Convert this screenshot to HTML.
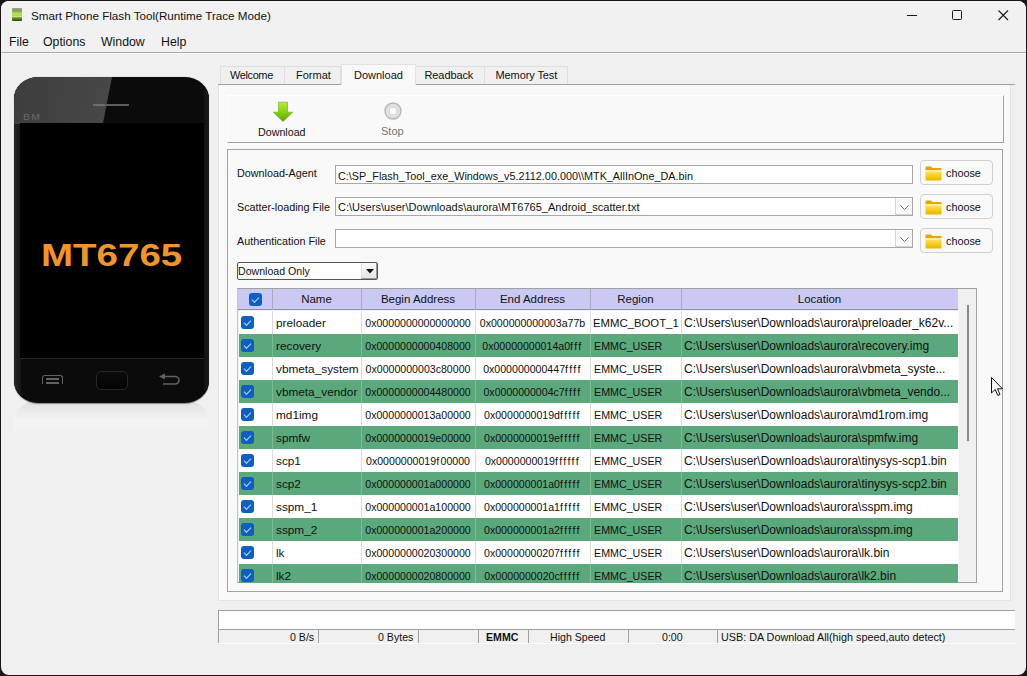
<!DOCTYPE html>
<html><head><meta charset="utf-8">
<style>
*{margin:0;padding:0;box-sizing:border-box}
html,body{width:1027px;height:676px;overflow:hidden;background:#1c1518;font-family:"Liberation Sans",sans-serif;color:#000}
.a{position:absolute}
#win{position:absolute;left:1px;top:1px;width:1025px;height:674px;background:#f0f0f0;border-radius:8px;overflow:hidden}
.t{position:absolute;white-space:nowrap;font-size:11px;line-height:13px;color:#111}
.menu{font-size:12.3px;line-height:14px;margin-top:-1px}
.tab{position:absolute;top:66px;height:18px;background:#f0f0f0;border:1px solid #dedede;border-bottom:none}
.tabt{position:absolute;top:69px;font-size:11px;line-height:13px;white-space:nowrap;color:#111}
.lbl{font-size:10.8px}
.fld{position:absolute;left:335px;width:578px;height:19px;background:#fff;border:1px solid #a8a8a8}
.drop{position:absolute;right:0;top:0;width:17px;height:17px;border:1px solid #d4d4d4;border-right:none;border-top:none;background:#f9f9f9}
.btn{position:absolute;left:920px;width:73px;height:25px;background:#f9f9f9;border:1px solid #d0d0d0;border-radius:4px}
.folder{position:absolute;left:4px;top:5px}
.btnt{position:absolute;left:25px;top:6px;font-size:10.8px;line-height:13px;color:#111}
.cb{position:absolute;width:13px;height:13px;background:#0f5fc2;border-radius:3px}
.cb::after{content:"";position:absolute;left:3px;top:3.5px;width:6px;height:3px;border-left:1.6px solid #b4d8ff;border-bottom:1.6px solid #b4d8ff;transform:rotate(-45deg)}
.hd{font-size:11.5px;color:#111}
.tn{font-size:11.8px}
.f{letter-spacing:1.4px}
.trg{font-size:11.35px}
.tl{font-size:12px}
.td{font-size:10.6px;color:#111}

.st{position:absolute;top:629px;height:14px;border-left:1px solid #a0a0a0;border-top:1px solid #a0a0a0;background:#f0f0f0}
.stt{position:absolute;top:631px;font-size:10.6px;line-height:12px;white-space:nowrap;color:#111}
</style></head><body>
<div id="win"></div>
<!-- title bar -->
<div class="a" style="left:1px;top:1px;width:1025px;height:51px;background:#f1f1f1;border-radius:8px 8px 0 0"></div>
<div class="a" style="left:1px;top:52px;width:1025px;height:1px;background:#a9a9a9"></div>
<div class="a" style="left:1px;top:53px;width:1025px;height:1px;background:#f8f8f8"></div>
<div class="a" style="left:12px;top:8px;width:10px;height:13px;border-radius:1px;background:linear-gradient(#9a9a9a 0,#9a9a9a 10%,#6fa82a 16%,#a5d648 40%,#d9efa8 45%,#9ad048 52%,#c5e68a 66%,#6aa020 75%,#3a6a0a 92%,#203a05 100%)"></div>
<div class="t" style="left:31px;top:9px;font-size:11.65px;line-height:13px">Smart Phone Flash Tool(Runtime Trace Mode)</div>
<!-- window controls -->
<div class="a" style="left:907px;top:15px;width:10px;height:1px;background:#1a1a1a"></div>
<div class="a" style="left:952px;top:10px;width:10px;height:10px;border:1px solid #1a1a1a;border-radius:1.5px"></div>
<svg class="a" style="left:998px;top:10px" width="11" height="11"><path d="M0.5 0.5L10 10M10 0.5L0.5 10" stroke="#1a1a1a" stroke-width="1.1" fill="none"/></svg>
<!-- menu -->
<div class="t menu" style="left:9px;top:36px">File</div>
<div class="t menu" style="left:43px;top:36px">Options</div>
<div class="t menu" style="left:101px;top:36px">Window</div>
<div class="t menu" style="left:161px;top:36px">Help</div>

<!-- phone -->
<div class="a" style="left:14px;top:401px;width:195px;height:36px;background:linear-gradient(rgba(0,0,0,0.07),rgba(0,0,0,0.02) 30%,rgba(255,255,255,0.25) 55%,rgba(255,255,255,0));border-radius:22px 22px 0 0"></div>
<div class="a" style="left:14px;top:77px;width:195px;height:326px;border-radius:24px/22px;background:#0b0b0b;overflow:hidden;box-shadow:0 0.5px 1px rgba(0,0,0,.4)">
  <div class="a" style="left:0;top:0;width:7px;height:326px;background:linear-gradient(90deg,#262626,#161616)"></div>
  <div class="a" style="right:0;top:0;width:5px;height:326px;background:linear-gradient(90deg,#111,#1a1a1a)"></div>
  <div class="a" style="left:-30px;top:0;width:127.5px;height:47px;background:linear-gradient(90deg,#3a3a3a,#474747);transform:skewX(-11deg);transform-origin:0 0"></div>
  <div class="a" style="left:79px;top:27px;width:36px;height:2px;background:#5c5c5c"></div>
  <div class="a" style="left:79px;top:27px;width:12px;height:2px;background:#6e6e6e"></div>
  <div class="a" style="left:8.5px;top:35px;font-size:9.5px;line-height:9px;color:#6a6a6a;letter-spacing:1.2px;transform:scaleX(1.1);transform-origin:0 0">BM</div>
  <div class="a" style="left:6px;top:46px;width:184px;height:236px;background:#000"></div>
  <div class="a" style="left:6px;top:281px;width:184px;height:1px;background:#262626"></div>
</div>
<div class="a" style="left:41px;top:244px;width:112px;font-size:30.8px;line-height:23px;height:23px;font-weight:bold;color:#f0952a;transform:scaleX(1.25);transform-origin:0 0;white-space:nowrap">MT6765</div>
<!-- phone buttons -->
<div class="a" style="left:42px;top:375px;width:21px;height:9px;border:1.5px solid #626262;border-radius:3px 3px 0 0;border-bottom:none"></div>
<div class="a" style="left:46px;top:378px;width:13px;height:1.5px;background:#626262"></div>
<div class="a" style="left:46px;top:382px;width:13px;height:1.5px;background:#626262"></div>
<div class="a" style="left:96px;top:371px;width:32px;height:19px;border:1px solid #262626;border-radius:5px;background:linear-gradient(#0d0d0d,#020202)"></div>
<svg class="a" style="left:158px;top:372px" width="24" height="14"><path d="M5 4.5H17a4 3.75 0 0 1 0 7.5H5" stroke="#626262" stroke-width="1.6" fill="none"/><path d="M1 4.5L7 1.5V7.5Z" fill="#626262"/></svg>

<!-- tab widget -->
<div class="a" style="left:218px;top:84px;width:793px;height:517px;background:#f9f9f9;border:1px solid #e4e4e4;border-top:none"></div>
<div class="a" style="left:218px;top:84px;width:797px;height:1px;background:#a0a0a0"></div>
<div class="tab" style="left:220px;width:65px"></div>
<div class="tab" style="left:284px;width:57px"></div>
<div class="tab" style="left:415px;width:70px"></div>
<div class="tab" style="left:484px;width:84px"></div>
<div class="a" style="left:341px;top:64px;width:75px;height:21px;background:#f9f9f9;border:1px solid #e2e2e2;border-bottom:none"></div>
<div class="tabt" style="left:230px;letter-spacing:-0.4px">Welcome</div>
<div class="tabt" style="left:296px">Format</div>
<div class="tabt" style="left:354px;top:69px">Download</div>
<div class="tabt" style="left:424.5px;letter-spacing:-0.1px">Readback</div>
<div class="tabt" style="left:495.5px;letter-spacing:-0.1px">Memory Test</div>

<!-- toolbar -->
<div class="a" style="left:227px;top:95px;width:777px;height:48px;background:#f9f9f9;border-right:1px solid #a0a0a0;border-bottom:1px solid #a0a0a0;border-top:1px solid #fff;border-left:1px solid #fff"></div>
<svg class="a" style="left:273px;top:101px" width="20" height="21"><defs><linearGradient id="ga" x1="0" y1="0" x2="0" y2="1"><stop offset="0" stop-color="#b2ee3a"/><stop offset="0.45" stop-color="#8ed616"/><stop offset="1" stop-color="#5aa400"/></linearGradient></defs><path d="M5.5 1.2H14.5V11.2H19.7L10 20.6L0.3 11.2H5.5Z" fill="url(#ga)" stroke="#6aa80a" stroke-width="0.6" stroke-linejoin="round"/></svg>
<div class="t" style="left:258px;top:126px;font-size:10.7px">Download</div>
<svg class="a" style="left:383px;top:101px" width="20" height="20"><circle cx="10" cy="10" r="8" fill="#e4e4e4" stroke="#b8b8b8" stroke-width="1.4"/><circle cx="10" cy="10" r="6" fill="none" stroke="#d0d0d0" stroke-width="0.6"/><rect x="6.7" y="6.7" width="6.6" height="6.6" rx="1" fill="#fff" stroke="#c4c4c4" stroke-width="0.6"/></svg>
<div class="t" style="left:381px;top:125px;font-size:11px;color:#747474">Stop</div>

<!-- group box -->
<div class="a" style="left:227px;top:149px;width:776px;height:443px;border:1px solid #a0a0a0;border-right-color:#a0a0a0;background:#f9f9f9"></div>

<div class="t lbl" style="left:237px;top:167px">Download-Agent</div>
<div class="t lbl" style="left:237px;top:201px">Scatter-loading File</div>
<div class="t lbl" style="left:237px;top:235px">Authentication File</div>

<div class="fld" style="top:165px"><div class="t" style="left:2px;top:4px;font-size:10.83px">C:\SP_Flash_Tool_exe_Windows_v5.2112.00.000\\MTK_AllInOne_DA.bin</div></div>
<div class="fld" style="top:197px"><div class="t" style="left:2px;top:3px;font-size:11.05px">C:\Users\user\Downloads\aurora\MT6765_Android_scatter.txt</div><div class="drop"><svg class="a" style="left:3.5px;top:6.5px" width="9" height="5"><path d="M0.5 0.5L4.5 4.5L8.5 0.5" stroke="#707070" fill="none"/></svg></div></div>
<div class="fld" style="top:229px"><div class="drop"><svg class="a" style="left:3.5px;top:6.5px" width="9" height="5"><path d="M0.5 0.5L4.5 4.5L8.5 0.5" stroke="#707070" fill="none"/></svg></div></div>

<div class="btn" style="top:160px"><svg class="folder" width="17" height="15" viewBox="0 0 17 15"><defs><linearGradient id="fg" x1="0" y1="0" x2="0" y2="1"><stop offset="0" stop-color="#ffe88a"/><stop offset="0.5" stop-color="#f9d020"/><stop offset="1" stop-color="#e8b400"/></linearGradient></defs><path d="M0.5 1.5Q0.5 0.5 1.5 0.5H6L7.5 2H15.5Q16.5 2 16.5 3V4H0.5Z" fill="#e0a800"/><path d="M0.5 4H16.5V13.5Q16.5 14.5 15.5 14.5H1.5Q0.5 14.5 0.5 13.5Z" fill="url(#fg)"/><rect x="1" y="4.5" width="15" height="1.2" fill="#fff6c8" opacity="0.8"/></svg><div class="btnt">choose</div></div>
<div class="btn" style="top:194px"><svg class="folder" width="17" height="15" viewBox="0 0 17 15"><defs><linearGradient id="fg" x1="0" y1="0" x2="0" y2="1"><stop offset="0" stop-color="#ffe88a"/><stop offset="0.5" stop-color="#f9d020"/><stop offset="1" stop-color="#e8b400"/></linearGradient></defs><path d="M0.5 1.5Q0.5 0.5 1.5 0.5H6L7.5 2H15.5Q16.5 2 16.5 3V4H0.5Z" fill="#e0a800"/><path d="M0.5 4H16.5V13.5Q16.5 14.5 15.5 14.5H1.5Q0.5 14.5 0.5 13.5Z" fill="url(#fg)"/><rect x="1" y="4.5" width="15" height="1.2" fill="#fff6c8" opacity="0.8"/></svg><div class="btnt">choose</div></div>
<div class="btn" style="top:228px"><svg class="folder" width="17" height="15" viewBox="0 0 17 15"><defs><linearGradient id="fg" x1="0" y1="0" x2="0" y2="1"><stop offset="0" stop-color="#ffe88a"/><stop offset="0.5" stop-color="#f9d020"/><stop offset="1" stop-color="#e8b400"/></linearGradient></defs><path d="M0.5 1.5Q0.5 0.5 1.5 0.5H6L7.5 2H15.5Q16.5 2 16.5 3V4H0.5Z" fill="#e0a800"/><path d="M0.5 4H16.5V13.5Q16.5 14.5 15.5 14.5H1.5Q0.5 14.5 0.5 13.5Z" fill="url(#fg)"/><rect x="1" y="4.5" width="15" height="1.2" fill="#fff6c8" opacity="0.8"/></svg><div class="btnt">choose</div></div>

<!-- combo -->
<div class="a" style="left:237px;top:262px;width:141px;height:18px;background:#fff;border:1px solid #555;border-radius:2px">
  <div class="t" style="left:0px;top:2px;font-size:10.6px">Download Only</div>
  <div class="a" style="right:0;top:0;width:16px;height:16px;background:linear-gradient(#fafafa,#e4e4e4);border-left:1px solid #e0e0e0;border-right:1px solid #999;border-bottom:1px solid #999"><svg class="a" style="left:3.5px;top:6px" width="8" height="5"><path d="M0 0H8L4 4.5Z" fill="#111"/></svg></div>
</div>

<!--TABLE-->
<div class="a" style="left:237px;top:288px;width:740px;height:295px;border:1px solid #a0a0a0;border-left-color:#c4c4c4;background:#f0f0f0;overflow:hidden"></div>
<div class="a" style="left:238px;top:289px;width:720px;height:21px;background:#c9c9f4;border-bottom:1px solid #8f8fa6"></div>
<div class="a" style="left:272px;top:289px;width:1px;height:21px;background:#a8a8c8"></div>
<div class="a" style="left:361px;top:289px;width:1px;height:21px;background:#a8a8c8"></div>
<div class="a" style="left:475px;top:289px;width:1px;height:21px;background:#a8a8c8"></div>
<div class="a" style="left:590px;top:289px;width:1px;height:21px;background:#a8a8c8"></div>
<div class="a" style="left:681px;top:289px;width:1px;height:21px;background:#a8a8c8"></div>
<div class="t hd" style="left:272px;width:89px;top:293px;text-align:center">Name</div>
<div class="t hd" style="left:361px;width:114px;top:293px;text-align:center">Begin Address</div>
<div class="t hd" style="left:475px;width:115px;top:293px;text-align:center">End Address</div>
<div class="t hd" style="left:590px;width:91px;top:293px;text-align:center">Region</div>
<div class="t hd" style="left:681px;width:277px;top:293px;text-align:center">Location</div>
<div class="cb" style="left:249px;top:293px"></div>
<div class="a" style="left:239px;top:311px;width:719px;height:23px;background:#fff"></div>
<div class="a" style="left:272px;top:311px;width:1px;height:23px;background:#dcdcdc"></div>
<div class="a" style="left:361px;top:311px;width:1px;height:23px;background:#dcdcdc"></div>
<div class="a" style="left:475px;top:311px;width:1px;height:23px;background:#dcdcdc"></div>
<div class="a" style="left:590px;top:311px;width:1px;height:23px;background:#dcdcdc"></div>
<div class="a" style="left:681px;top:311px;width:1px;height:23px;background:#dcdcdc"></div>
<div class="cb" style="left:241px;top:316px"></div>
<div class="t tn" style="left:276px;top:317px">preloader</div>
<div class="t td" style="left:361px;width:114px;top:317px;text-align:center">0x0000000000000000</div>
<div class="t td" style="left:475px;width:115px;top:317px;text-align:center">0x000000000003a77b</div>
<div class="t trg" style="left:593px;top:317px;font-size:11.35px">EMMC_BOOT_1</div>
<div class="t tl" style="left:684px;top:317px">C:\Users\user\Downloads\aurora\preloader_k62v...</div>
<div class="a" style="left:239px;top:334px;width:719px;height:23px;background:#5aa87c"></div>
<div class="a" style="left:272px;top:334px;width:1px;height:23px;background:#7cbb96"></div>
<div class="a" style="left:361px;top:334px;width:1px;height:23px;background:#7cbb96"></div>
<div class="a" style="left:475px;top:334px;width:1px;height:23px;background:#7cbb96"></div>
<div class="a" style="left:590px;top:334px;width:1px;height:23px;background:#7cbb96"></div>
<div class="a" style="left:681px;top:334px;width:1px;height:23px;background:#7cbb96"></div>
<div class="cb" style="left:241px;top:339px"></div>
<div class="t tn" style="left:276px;top:340px">recovery</div>
<div class="t td" style="left:361px;width:114px;top:340px;text-align:center">0x0000000000408000</div>
<div class="t td" style="left:475px;width:115px;top:340px;text-align:center">0x00000000014a0<span class="f">fff</span></div>
<div class="t trg" style="left:594px;top:340px;font-size:10.7px">EMMC_USER</div>
<div class="t tl" style="left:684px;top:340px">C:\Users\user\Downloads\aurora\recovery.img</div>
<div class="a" style="left:239px;top:357px;width:719px;height:23px;background:#fff"></div>
<div class="a" style="left:272px;top:357px;width:1px;height:23px;background:#dcdcdc"></div>
<div class="a" style="left:361px;top:357px;width:1px;height:23px;background:#dcdcdc"></div>
<div class="a" style="left:475px;top:357px;width:1px;height:23px;background:#dcdcdc"></div>
<div class="a" style="left:590px;top:357px;width:1px;height:23px;background:#dcdcdc"></div>
<div class="a" style="left:681px;top:357px;width:1px;height:23px;background:#dcdcdc"></div>
<div class="cb" style="left:241px;top:362px"></div>
<div class="t tn" style="left:276px;top:363px">vbmeta_system</div>
<div class="t td" style="left:361px;width:114px;top:363px;text-align:center">0x0000000003c80000</div>
<div class="t td" style="left:475px;width:115px;top:363px;text-align:center">0x000000000447<span class="f">ffff</span></div>
<div class="t trg" style="left:594px;top:363px;font-size:10.7px">EMMC_USER</div>
<div class="t tl" style="left:684px;top:363px">C:\Users\user\Downloads\aurora\vbmeta_syste...</div>
<div class="a" style="left:239px;top:380px;width:719px;height:23px;background:#5aa87c"></div>
<div class="a" style="left:272px;top:380px;width:1px;height:23px;background:#7cbb96"></div>
<div class="a" style="left:361px;top:380px;width:1px;height:23px;background:#7cbb96"></div>
<div class="a" style="left:475px;top:380px;width:1px;height:23px;background:#7cbb96"></div>
<div class="a" style="left:590px;top:380px;width:1px;height:23px;background:#7cbb96"></div>
<div class="a" style="left:681px;top:380px;width:1px;height:23px;background:#7cbb96"></div>
<div class="cb" style="left:241px;top:385px"></div>
<div class="t tn" style="left:276px;top:386px">vbmeta_vendor</div>
<div class="t td" style="left:361px;width:114px;top:386px;text-align:center">0x0000000004480000</div>
<div class="t td" style="left:475px;width:115px;top:386px;text-align:center">0x0000000004c7<span class="f">ffff</span></div>
<div class="t trg" style="left:594px;top:386px;font-size:10.7px">EMMC_USER</div>
<div class="t tl" style="left:684px;top:386px">C:\Users\user\Downloads\aurora\vbmeta_vendo...</div>
<div class="a" style="left:239px;top:403px;width:719px;height:23px;background:#fff"></div>
<div class="a" style="left:272px;top:403px;width:1px;height:23px;background:#dcdcdc"></div>
<div class="a" style="left:361px;top:403px;width:1px;height:23px;background:#dcdcdc"></div>
<div class="a" style="left:475px;top:403px;width:1px;height:23px;background:#dcdcdc"></div>
<div class="a" style="left:590px;top:403px;width:1px;height:23px;background:#dcdcdc"></div>
<div class="a" style="left:681px;top:403px;width:1px;height:23px;background:#dcdcdc"></div>
<div class="cb" style="left:241px;top:408px"></div>
<div class="t tn" style="left:276px;top:409px">md1img</div>
<div class="t td" style="left:361px;width:114px;top:409px;text-align:center">0x0000000013a00000</div>
<div class="t td" style="left:475px;width:115px;top:409px;text-align:center">0x0000000019d<span class="f">fffff</span></div>
<div class="t trg" style="left:594px;top:409px;font-size:10.7px">EMMC_USER</div>
<div class="t tl" style="left:684px;top:409px">C:\Users\user\Downloads\aurora\md1rom.img</div>
<div class="a" style="left:239px;top:426px;width:719px;height:23px;background:#5aa87c"></div>
<div class="a" style="left:272px;top:426px;width:1px;height:23px;background:#7cbb96"></div>
<div class="a" style="left:361px;top:426px;width:1px;height:23px;background:#7cbb96"></div>
<div class="a" style="left:475px;top:426px;width:1px;height:23px;background:#7cbb96"></div>
<div class="a" style="left:590px;top:426px;width:1px;height:23px;background:#7cbb96"></div>
<div class="a" style="left:681px;top:426px;width:1px;height:23px;background:#7cbb96"></div>
<div class="cb" style="left:241px;top:431px"></div>
<div class="t tn" style="left:276px;top:432px">spmfw</div>
<div class="t td" style="left:361px;width:114px;top:432px;text-align:center">0x0000000019e00000</div>
<div class="t td" style="left:475px;width:115px;top:432px;text-align:center">0x0000000019e<span class="f">fffff</span></div>
<div class="t trg" style="left:594px;top:432px;font-size:10.7px">EMMC_USER</div>
<div class="t tl" style="left:684px;top:432px">C:\Users\user\Downloads\aurora\spmfw.img</div>
<div class="a" style="left:239px;top:449px;width:719px;height:23px;background:#fff"></div>
<div class="a" style="left:272px;top:449px;width:1px;height:23px;background:#dcdcdc"></div>
<div class="a" style="left:361px;top:449px;width:1px;height:23px;background:#dcdcdc"></div>
<div class="a" style="left:475px;top:449px;width:1px;height:23px;background:#dcdcdc"></div>
<div class="a" style="left:590px;top:449px;width:1px;height:23px;background:#dcdcdc"></div>
<div class="a" style="left:681px;top:449px;width:1px;height:23px;background:#dcdcdc"></div>
<div class="cb" style="left:241px;top:454px"></div>
<div class="t tn" style="left:276px;top:455px">scp1</div>
<div class="t td" style="left:361px;width:114px;top:455px;text-align:center">0x0000000019<span class="f">f</span>00000</div>
<div class="t td" style="left:475px;width:115px;top:455px;text-align:center">0x0000000019<span class="f">ffffff</span></div>
<div class="t trg" style="left:594px;top:455px;font-size:10.7px">EMMC_USER</div>
<div class="t tl" style="left:684px;top:455px">C:\Users\user\Downloads\aurora\tinysys-scp1.bin</div>
<div class="a" style="left:239px;top:472px;width:719px;height:23px;background:#5aa87c"></div>
<div class="a" style="left:272px;top:472px;width:1px;height:23px;background:#7cbb96"></div>
<div class="a" style="left:361px;top:472px;width:1px;height:23px;background:#7cbb96"></div>
<div class="a" style="left:475px;top:472px;width:1px;height:23px;background:#7cbb96"></div>
<div class="a" style="left:590px;top:472px;width:1px;height:23px;background:#7cbb96"></div>
<div class="a" style="left:681px;top:472px;width:1px;height:23px;background:#7cbb96"></div>
<div class="cb" style="left:241px;top:477px"></div>
<div class="t tn" style="left:276px;top:478px">scp2</div>
<div class="t td" style="left:361px;width:114px;top:478px;text-align:center">0x000000001a000000</div>
<div class="t td" style="left:475px;width:115px;top:478px;text-align:center">0x000000001a0<span class="f">fffff</span></div>
<div class="t trg" style="left:594px;top:478px;font-size:10.7px">EMMC_USER</div>
<div class="t tl" style="left:684px;top:478px">C:\Users\user\Downloads\aurora\tinysys-scp2.bin</div>
<div class="a" style="left:239px;top:495px;width:719px;height:23px;background:#fff"></div>
<div class="a" style="left:272px;top:495px;width:1px;height:23px;background:#dcdcdc"></div>
<div class="a" style="left:361px;top:495px;width:1px;height:23px;background:#dcdcdc"></div>
<div class="a" style="left:475px;top:495px;width:1px;height:23px;background:#dcdcdc"></div>
<div class="a" style="left:590px;top:495px;width:1px;height:23px;background:#dcdcdc"></div>
<div class="a" style="left:681px;top:495px;width:1px;height:23px;background:#dcdcdc"></div>
<div class="cb" style="left:241px;top:500px"></div>
<div class="t tn" style="left:276px;top:501px">sspm_1</div>
<div class="t td" style="left:361px;width:114px;top:501px;text-align:center">0x000000001a100000</div>
<div class="t td" style="left:475px;width:115px;top:501px;text-align:center">0x000000001a1<span class="f">fffff</span></div>
<div class="t trg" style="left:594px;top:501px;font-size:10.7px">EMMC_USER</div>
<div class="t tl" style="left:684px;top:501px">C:\Users\user\Downloads\aurora\sspm.img</div>
<div class="a" style="left:239px;top:518px;width:719px;height:23px;background:#5aa87c"></div>
<div class="a" style="left:272px;top:518px;width:1px;height:23px;background:#7cbb96"></div>
<div class="a" style="left:361px;top:518px;width:1px;height:23px;background:#7cbb96"></div>
<div class="a" style="left:475px;top:518px;width:1px;height:23px;background:#7cbb96"></div>
<div class="a" style="left:590px;top:518px;width:1px;height:23px;background:#7cbb96"></div>
<div class="a" style="left:681px;top:518px;width:1px;height:23px;background:#7cbb96"></div>
<div class="cb" style="left:241px;top:523px"></div>
<div class="t tn" style="left:276px;top:524px">sspm_2</div>
<div class="t td" style="left:361px;width:114px;top:524px;text-align:center">0x000000001a200000</div>
<div class="t td" style="left:475px;width:115px;top:524px;text-align:center">0x000000001a2<span class="f">fffff</span></div>
<div class="t trg" style="left:594px;top:524px;font-size:10.7px">EMMC_USER</div>
<div class="t tl" style="left:684px;top:524px">C:\Users\user\Downloads\aurora\sspm.img</div>
<div class="a" style="left:239px;top:541px;width:719px;height:23px;background:#fff"></div>
<div class="a" style="left:272px;top:541px;width:1px;height:23px;background:#dcdcdc"></div>
<div class="a" style="left:361px;top:541px;width:1px;height:23px;background:#dcdcdc"></div>
<div class="a" style="left:475px;top:541px;width:1px;height:23px;background:#dcdcdc"></div>
<div class="a" style="left:590px;top:541px;width:1px;height:23px;background:#dcdcdc"></div>
<div class="a" style="left:681px;top:541px;width:1px;height:23px;background:#dcdcdc"></div>
<div class="cb" style="left:241px;top:546px"></div>
<div class="t tn" style="left:276px;top:547px">lk</div>
<div class="t td" style="left:361px;width:114px;top:547px;text-align:center">0x0000000020300000</div>
<div class="t td" style="left:475px;width:115px;top:547px;text-align:center">0x00000000207<span class="f">fffff</span></div>
<div class="t trg" style="left:594px;top:547px;font-size:10.7px">EMMC_USER</div>
<div class="t tl" style="left:684px;top:547px">C:\Users\user\Downloads\aurora\lk.bin</div>
<div class="a" style="left:239px;top:564px;width:719px;height:19px;background:#5aa87c"></div>
<div class="a" style="left:272px;top:564px;width:1px;height:19px;background:#7cbb96"></div>
<div class="a" style="left:361px;top:564px;width:1px;height:19px;background:#7cbb96"></div>
<div class="a" style="left:475px;top:564px;width:1px;height:19px;background:#7cbb96"></div>
<div class="a" style="left:590px;top:564px;width:1px;height:19px;background:#7cbb96"></div>
<div class="a" style="left:681px;top:564px;width:1px;height:19px;background:#7cbb96"></div>
<div class="cb" style="left:241px;top:569px"></div>
<div class="t tn" style="left:276px;top:570px">lk2</div>
<div class="t td" style="left:361px;width:114px;top:570px;text-align:center">0x0000000020800000</div>
<div class="t td" style="left:475px;width:115px;top:570px;text-align:center">0x0000000020c<span class="f">fffff</span></div>
<div class="t trg" style="left:594px;top:570px;font-size:10.7px">EMMC_USER</div>
<div class="t tl" style="left:684px;top:570px">C:\Users\user\Downloads\aurora\lk2.bin</div>
<div class="a" style="left:958px;top:310px;width:1px;height:272px;background:#fafafa"></div>
<div class="a" style="left:967px;top:305px;width:2px;height:136px;background:#8a8a8a"></div>
<!--/TABLE-->


<!-- progress + status -->
<div class="a" style="left:218px;top:610px;width:797px;height:20px;background:#fff;border-top:1px solid #a0a0a0;border-left:1px solid #a0a0a0"></div>
<div class="st" style="left:218px;width:100px"></div>
<div class="st" style="left:318px;width:100px"></div>
<div class="st" style="left:418px;width:60px"></div>
<div class="st" style="left:478px;width:50px"></div>
<div class="st" style="left:528px;width:100px"></div>
<div class="st" style="left:628px;width:90px"></div>
<div class="st" style="left:717px;width:298px"></div>
<div class="a" style="left:218px;top:643px;width:797px;height:1px;background:#fff"></div>
<div class="stt" style="left:290px">0 B/s</div>
<div class="stt" style="left:378px">0 Bytes</div>
<div class="stt" style="left:486px;font-weight:bold">EMMC</div>
<div class="stt" style="left:550px">High Speed</div>
<div class="stt" style="left:662px">0:00</div>
<div class="stt" style="left:721px;font-size:10.8px">USB: DA Download All(high speed,auto detect)</div>
<!-- cursor -->
<svg class="a" style="left:990px;top:376px" width="14" height="22"><path d="M1.5 1.5V17L5.2 13.5L7.8 19.5L10 18.5L7.5 12.8H12.5Z" fill="#fff" stroke="#111" stroke-width="1" stroke-linejoin="round"/></svg>
</body></html>
